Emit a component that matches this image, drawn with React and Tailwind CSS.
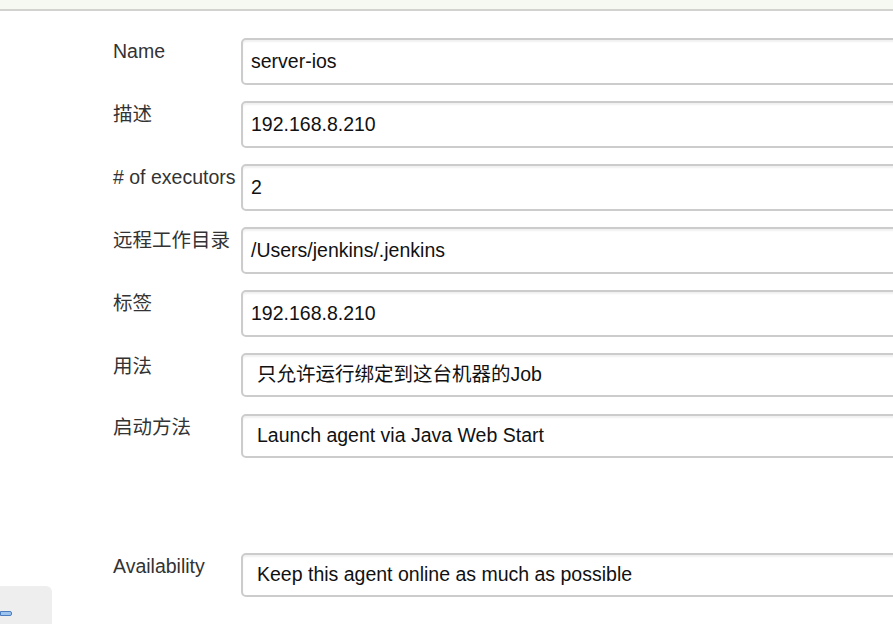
import React from "react";

const font = { fontFamily: '"Liberation Sans", Arial, "Noto Sans CJK SC", sans-serif' };

const fields = [
    { label: "Name", value: "server-ios", kind: "text" },
    { label: "描述", value: "192.168.8.210", kind: "text" },
    { label: "# of executors", value: "2", kind: "text" },
    { label: "远程工作目录", value: "/Users/jenkins/.jenkins", kind: "text" },
    { label: "标签", value: "192.168.8.210", kind: "text" },
    { label: "用法", value: "只允许运行绑定到这台机器的Job", kind: "select" },
    { label: "启动方法", value: "Launch agent via Java Web Start", kind: "select" },
];

function Row({ label, value, kind, className = "" }) {
    const isSelect = kind === "select";
    return (
        <div className={`flex items-start ${className}`}>
            <div className="w-[128px] shrink-0 -mt-px text-[19.5px] leading-[28px] text-[#333]">{label}</div>
            <div
                className={`w-[720px] shrink-0 flex items-center border-2 border-[#cccccc] rounded-[5px] bg-white text-[19.5px] text-[#111] shadow-[inset_0_2px_2px_rgba(0,0,0,0.06)] whitespace-nowrap ${
                    isSelect ? "h-[44px] pl-[14px]" : "h-[47px] pl-[8px]"
                }`}
            >
                {value}
            </div>
        </div>
    );
}

export default function App() {
    return (
        <div className="relative w-[893px] h-[624px] overflow-hidden bg-white" style={font}>
            <div className="h-[11px] bg-[#f6f9f1] border-b-2 border-[#d2d2ce]" />

            <div className="pl-[113px] pt-[27px] flex flex-col">
                {fields.map((f, i) => (
                    <Row
                        key={i}
                        {...f}
                        className={i === 0 ? "" : i === 6 ? "mt-[17px]" : "mt-[16px]"}
                    />
                ))}
                <Row label="Availability" value="Keep this agent online as much as possible" kind="select" className="mt-[95px]" />
            </div>

            {/* collapsed side widget */}
            <div className="absolute left-0 bottom-0 w-[52px] h-[38px] bg-[#eeeeee] rounded-tr-[6px]">
                <div className="absolute left-0 top-[25px] w-[12px] h-[5px] bg-[#9cc3ee] border border-[#4a7cbf] rounded-r-[2px]" />
            </div>
        </div>
    );
}
